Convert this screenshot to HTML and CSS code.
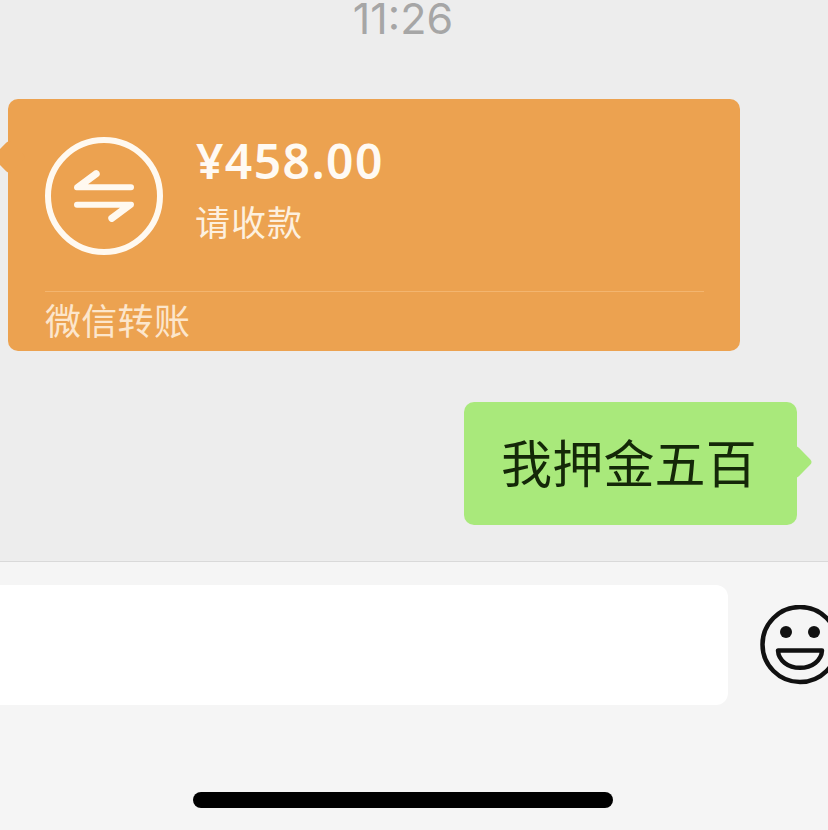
FILE: index.html
```html
<!DOCTYPE html>
<html lang="zh">
<head>
<meta charset="utf-8">
<title>WeChat</title>
<link rel="stylesheet" href="styles.css">
</head>
<body>
<div class="screen">
  <main class="chat">
    <div class="time">11:26</div>
    <div class="transfer">
      <div class="transfer-main">
        <svg class="transfer-icon" viewBox="0 0 118 118" aria-hidden="true">
          <circle cx="59" cy="59" r="56" fill="none" stroke="currentColor" stroke-width="6"/>
          <path d="M31 47.300L49.500 33.500Q52 32 54 34.500Q56 37.500 53.500 39.500L43 47.300H86Q89 47.300 89 50.300Q89 53.300 86 53.300H31.500Q29 53.300 29 50.300Q29 48.500 31 47.300Z" fill="currentColor"/>
          <path d="M31 47.300L49.500 33.500Q52 32 54 34.500Q56 37.500 53.500 39.500L43 47.300H86Q89 47.300 89 50.300Q89 53.300 86 53.300H31.500Q29 53.300 29 50.300Q29 48.500 31 47.300Z" fill="currentColor" transform="rotate(180 59 59)"/>
        </svg>
        <div class="transfer-text">
          <div class="amount">¥458.00</div>
          <div class="note">请收款</div>
        </div>
      </div>
      <div class="transfer-foot">微信转账</div>
    </div>
    <div class="outgoing">
      <div class="bubble">我押金五百</div>
    </div>
  </main>
  <footer class="bar">
    <div class="bar-row">
      <div class="input"></div>
      <svg class="emoji" viewBox="0 0 80 80" aria-hidden="true">
        <circle cx="40" cy="39.500" r="37.500" fill="none" stroke="currentColor" stroke-width="4.500"/>
        <circle cx="26" cy="27" r="6" fill="currentColor"/>
        <circle cx="54" cy="27" r="6" fill="currentColor"/>
        <path d="M18 45.500H62C61.500 55.500 52 62.800 40 62.800C28 62.800 18.500 55.500 18 45.500Z" fill="none" stroke="currentColor" stroke-width="4.500" stroke-linejoin="round"/>
      </svg>
    </div>
    <div class="home"></div>
  </footer>
</div>
</body>
</html>
```
FILE: styles.css
```css
* { box-sizing: border-box; }
html, body { margin: 0; padding: 0; }
body {
  width: 828px;
  height: 830px;
  overflow: hidden;
  font-family: "Noto Sans", "Noto Sans CJK SC", sans-serif;
}
.screen {
  width: 828px;
  height: 830px;
  overflow: hidden;
  display: flex;
  flex-direction: column;
  background: #f5f5f5;
}
.chat {
  height: 562px;
  flex: none;
  background: #ededed;
  border-bottom: 1px solid #d9d9d9;
  display: flex;
  flex-direction: column;
}
.time {
  height: 99px;
  width: 806px;
  flex: none;
  text-align: center;
  font-family: "Inter", sans-serif;
  font-size: 43px;
  line-height: 36px;
  color: #a6a6a6;
}
.transfer {
  position: relative;
  width: 732px;
  height: 252px;
  margin-left: 8px;
  background: #eca250;
  border-radius: 10px;
  padding: 38px 36px 0 37px;
  flex: none;
}
.transfer::before {
  content: "";
  position: absolute;
  left: -11px;
  top: 46px;
  width: 24px;
  height: 24px;
  background: #eca250;
  border-radius: 4px;
  transform: rotate(45deg);
}
.transfer-main {
  position: relative;
  display: flex;
  height: 155px;
  gap: 33px;
  border-bottom: 1px solid #f3b56f;
}
.transfer-icon {
  width: 118px;
  height: 118px;
  flex: none;
  color: #fff9f0;
}
.transfer-text {
  display: flex;
  flex-direction: column;
  margin-top: -8px;
}
.amount {
  font-size: 48px;
  line-height: 64px;
  font-weight: 600;
  letter-spacing: 1.400px;
  color: #fffaf3;
}
.note {
  font-family: "Noto Sans CJK SC", sans-serif;
  font-size: 35px;
  line-height: 50px;
  letter-spacing: 1px;
  margin-top: 3px;
  margin-left: -1px;
  color: #fdf0df;
}
.transfer-foot {
  font-family: "Noto Sans CJK SC", sans-serif;
  font-size: 36px;
  letter-spacing: 0.300px;
  line-height: 52px;
  margin-top: 1px;
  color: #fce6cc;
}
.outgoing {
  display: flex;
  justify-content: flex-end;
  padding-right: 31px;
  margin-top: 51px;
}
.bubble {
  position: relative;
  width: 333px;
  height: 123px;
  background: #a9e97b;
  border-radius: 10px;
  padding-left: 37px;
  font-family: "Noto Sans CJK SC", sans-serif;
  font-size: 51px;
  letter-spacing: 0.200px;
  line-height: 119px;
  color: #142808;
}
.bubble::after {
  content: "";
  position: absolute;
  right: -11px;
  top: 48px;
  width: 24px;
  height: 24px;
  background: #a9e97b;
  border-radius: 4px;
  transform: rotate(45deg);
}
.bar {
  flex: 1;
  display: flex;
  flex-direction: column;
}
.bar-row {
  display: flex;
  padding-top: 23px;
  gap: 32px;
}
.input {
  width: 748px;
  height: 120px;
  margin-left: -20px;
  flex: none;
  background: #fff;
  border-radius: 12px;
}
.emoji {
  width: 80px;
  height: 80px;
  flex: none;
  margin-top: 20px;
  color: #111;
}
.home {
  width: 420px;
  height: 16px;
  margin: 87px 0 0 193px;
  background: #000;
  border-radius: 8px;
}
```
